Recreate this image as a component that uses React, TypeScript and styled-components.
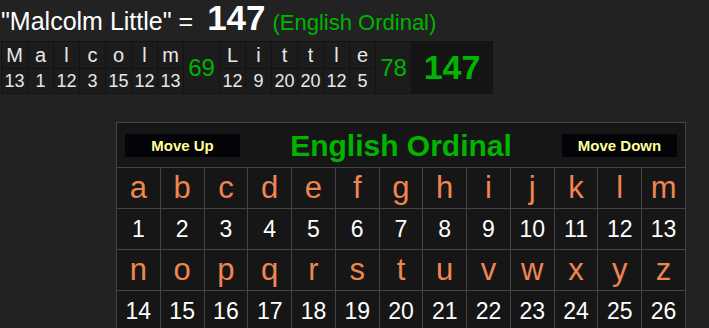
import styled, { createGlobalStyle } from 'styled-components';

const GlobalStyle = createGlobalStyle`
  html, body {
    margin: 0;
    padding: 0;
    background: #222222;
    font-family: "Liberation Sans", Arial, sans-serif;
  }
`;

const Page = styled.div`
  width: 709px;
  height: 328px;
  overflow: hidden;
  padding-left: 1px;
  box-sizing: border-box;
`;

const Heading = styled.div`
  height: 41px;
  line-height: 34px;
  color: #ffffff;
  font-size: 25px;
  white-space: nowrap;
`;

const Total = styled.b`
  font-size: 35px;
  line-height: 1;
  margin-left: 14px;
`;

const Cipher = styled.span`
  color: #00b400;
  font-size: 22px;
`;

const WordGrid = styled.div`
  display: inline-grid;
  grid-template-columns: repeat(7, 25px) 35px repeat(6, 25px) 35px 80px;
  grid-template-rows: 26px 24px;
  gap: 1px;
  padding: 1px;
  background: #131313;
`;

const WordCell = styled.div<{ $row: number }>`
  grid-row: ${({ $row }) => $row};
  background: #1c1c1c;
  color: #e8e8e8;
  font-size: ${({ $row }) => ($row === 1 ? '20px' : '18px')};
  display: flex;
  align-items: center;
  justify-content: center;
`;

const SumCell = styled.div<{ $big?: boolean }>`
  grid-row: 1 / span 2;
  background: ${({ $big }) => ($big ? '#141414' : '#1c1c1c')};
  color: #00b400;
  font-size: ${({ $big }) => ($big ? '34px' : '24px')};
  font-weight: ${({ $big }) => ($big ? 'bold' : 'normal')};
  display: flex;
  align-items: center;
  justify-content: center;
`;

const Chart = styled.table`
  margin: 28px 0 0 115px;
  width: 570px;
  table-layout: fixed;
  border-collapse: collapse;
  background: #161616;
  border: 1px solid #444444;
`;

const HeaderCell = styled.td`
  height: 44px;
  padding: 0 8px;
  border: 1px solid #444444;
`;

const HeaderBar = styled.div`
  display: flex;
  align-items: center;
  justify-content: space-between;
`;

const MoveButton = styled.div`
  width: 115px;
  height: 23px;
  background: #030308;
  color: #ffff99;
  font-size: 15px;
  font-weight: bold;
  display: flex;
  align-items: center;
  justify-content: center;
`;

const Title = styled.div`
  color: #00b400;
  font-size: 30px;
  font-weight: bold;
  margin-top: 2px;
`;

const Cell = styled.td<{ $letter?: boolean }>`
  height: 40px;
  padding: 0;
  border: 1px solid #444444;
  text-align: center;
  vertical-align: middle;
  color: ${({ $letter }) => ($letter ? '#ef8550' : '#ffffff')};
  font-size: ${({ $letter }) => ($letter ? '31px' : '23px')};
`;

const alphabet = 'abcdefghijklmnopqrstuvwxyz'.split('');
const value = (c: string) => c.toLowerCase().charCodeAt(0) - 96;

const WordPart = ({ word, start }: { word: string; start: number }) => (
  <>
    {word.split('').map((ch, i) => (
      <WordCell key={`l${start + i}`} $row={1} style={{ gridColumn: start + i }}>
        {ch}
      </WordCell>
    ))}
    {word.split('').map((ch, i) => (
      <WordCell key={`n${start + i}`} $row={2} style={{ gridColumn: start + i }}>
        {value(ch)}
      </WordCell>
    ))}
  </>
);

export default function App() {
  const rows = [alphabet.slice(0, 13), alphabet.slice(13)];
  return (
    <Page>
      <GlobalStyle />
      <Heading>
        "Malcolm Little" =<Total>147</Total> <Cipher>(English Ordinal)</Cipher>
      </Heading>
      <WordGrid>
        <WordPart word="Malcolm" start={1} />
        <SumCell style={{ gridColumn: 8 }}>69</SumCell>
        <WordPart word="Little" start={9} />
        <SumCell style={{ gridColumn: 15 }}>78</SumCell>
        <SumCell $big style={{ gridColumn: 16 }}>147</SumCell>
      </WordGrid>
      <Chart>
        <tbody>
          <tr>
            <HeaderCell colSpan={13}>
              <HeaderBar>
                <MoveButton>Move Up</MoveButton>
                <Title>English Ordinal</Title>
                <MoveButton>Move Down</MoveButton>
              </HeaderBar>
            </HeaderCell>
          </tr>
          {rows.map((letters, r) => [
            <tr key={`a${r}`}>
              {letters.map((l) => (
                <Cell $letter key={l}>{l}</Cell>
              ))}
            </tr>,
            <tr key={`b${r}`}>
              {letters.map((l) => (
                <Cell key={l}>{value(l)}</Cell>
              ))}
            </tr>,
          ])}
        </tbody>
      </Chart>
    </Page>
  );
}
